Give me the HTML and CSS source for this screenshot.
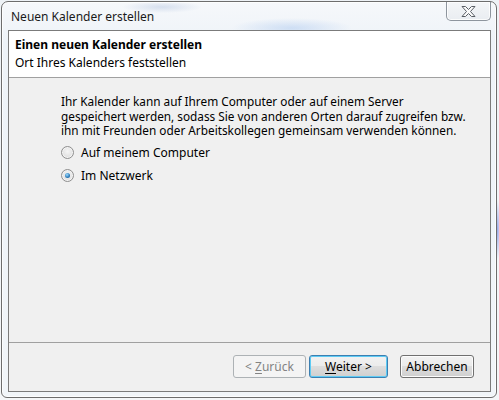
FILE: index.html
```html
<!DOCTYPE html>
<html lang="de">
<head>
<meta charset="utf-8">
<title>Neuen Kalender erstellen</title>
<link rel="stylesheet" href="styles.css">
</head>
<body>
<div class="desktop">
  <div class="window">
    <div class="titlebar">
      <span class="title">Neuen Kalender erstellen</span>
      <div class="close">
        <svg width="17" height="13" viewBox="0 0 17 13">
          <path d="M2 1.5 H5.5 L8.5 4.5 L11.5 1.5 H15 L10.5 6.5 L15 11.5 H11.5 L8.5 8.5 L5.5 11.5 H2 L6.5 6.5 Z" fill="#fbfbfb" stroke="#5a5f66" stroke-width="1" stroke-linejoin="round"/>
        </svg>
      </div>
    </div>
    <div class="client">
      <div class="header">
        <div class="h-title">Einen neuen Kalender erstellen</div>
        <div class="h-sub">Ort Ihres Kalenders feststellen</div>
      </div>
      <div class="content">
        <p class="desc">Ihr Kalender kann auf Ihrem Computer oder auf einem Server<br>gespeichert werden, sodass Sie von anderen Orten darauf zugreifen bzw.<br>ihn mit Freunden oder Arbeitskollegen gemeinsam verwenden können.</p>
        <div class="options">
          <label class="opt"><span class="radio"></span><span>Auf meinem Computer</span></label>
          <label class="opt"><span class="radio checked"></span><span>Im Netzwerk</span></label>
        </div>
      </div>
      <div class="footer">
        <button class="btn disabled">&lt; <u>Z</u>urück</button>
        <button class="btn default"><u>W</u>eiter &gt;</button>
        <button class="btn cancel">Abbrechen</button>
      </div>
    </div>
  </div>
</div>
</body>
</html>
```
FILE: styles.css
```css
html, body {
  margin: 0;
  padding: 0;
}
body {
  width: 499px;
  height: 400px;
  overflow: hidden;
  font-family: "Noto Sans", "Open Sans", sans-serif;
  font-size: 12px;
  color: #000;
}
.desktop {
  width: 499px;
  height: 400px;
  box-sizing: border-box;
  padding: 1px 2px 2px 1px;
  background:
    radial-gradient(ellipse 30px 8px at 280px 26px, rgba(120,160,230,0.35), transparent),
    radial-gradient(ellipse 20px 8px at 470px 28px, rgba(120,160,230,0.35), transparent),
    radial-gradient(ellipse 4px 30px at 497px 230px, rgba(90,110,220,0.6), transparent),
    linear-gradient(#eef2f6, #f4f6f8);
}
.window {
  width: 496px;
  height: 397px;
  box-sizing: border-box;
  border: 1px solid #6d6d6d;
  border-radius: 7px 7px 6px 6px;
  padding: 0 5px 5px 6px;
  display: flex;
  flex-direction: column;
  background:
    radial-gradient(ellipse 60px 10px at 290px 26px, rgba(140,180,235,0.35), transparent),
    radial-gradient(ellipse 40px 6px at 160px 5px, rgba(120,150,200,0.25), transparent),
    linear-gradient(#f6f8fb, #eef3f8 40px, #f1f5f9);
  box-shadow: inset 0 0 0 1px rgba(255,255,255,0.8);
}
.titlebar {
  height: 28px;
  flex: none;
  display: flex;
  align-items: flex-start;
  justify-content: space-between;
}
.title {
  margin: 7px 0 0 3px;
  font-size: 12px;
  line-height: 16px;
  color: #1a1a1a;
}
.close {
  width: 45px;
  height: 19px;
  box-sizing: border-box;
  border: 1px solid #8e959e;
  border-top: none;
  border-radius: 0 0 5px 5px;
  background: linear-gradient(#f4f6f8, #e9edf1);
  display: flex;
  align-items: center;
  justify-content: center;
  box-shadow: inset 0 0 0 1px rgba(255,255,255,0.8);
}
.client {
  flex: 1;
  border: 1px solid #7b7b7b;
  background: #f0f0f0;
  display: flex;
  flex-direction: column;
}
.header {
  height: 46px;
  flex: none;
  background: #fff;
  border-bottom: 1px solid #a0a0a0;
  padding: 0 6px;
}
.h-title {
  font-weight: bold;
  margin-top: 6px;
  line-height: 16px;
}
.h-sub {
  line-height: 16px;
  margin-top: 2px;
}
.content {
  flex: 1;
  padding: 16px 20px 0 52px;
}
.desc {
  margin: 0;
  line-height: 14.5px;
  font-size: 11.8px;
}
.options {
  margin-top: 7px;
  display: flex;
  flex-direction: column;
  gap: 7px;
}
.opt {
  display: flex;
  align-items: center;
  gap: 7px;
  height: 16px;
  line-height: 16px;
}
.radio {
  width: 11px;
  height: 11px;
  border-radius: 50%;
  border: 1px solid #8f8f8f;
  background: radial-gradient(circle at 50% 40%, #f6f6f6, #d5d5d5);
  box-shadow: inset 0 0 0 1px #f4f4f4;
  position: relative;
}
.radio.checked::after {
  content: "";
  position: absolute;
  left: 3px;
  top: 3px;
  width: 5px;
  height: 5px;
  border-radius: 50%;
  background: radial-gradient(circle at 40% 35%, #9fdcff, #2b7ab8 60%, #164f84);
}
.footer {
  height: 49px;
  flex: none;
  border-top: 1px solid #a0a0a0;
  display: flex;
  align-items: flex-start;
  padding: 12px 16px 0 0;
  justify-content: flex-end;
  box-sizing: border-box;
}
.btn {
  height: 23px;
  box-sizing: border-box;
  font-family: inherit;
  font-size: 12px;
  border-radius: 3px;
  border: 1px solid #707070;
  background: linear-gradient(#f2f2f2, #ebebeb 50%, #dddddd 50%, #cfcfcf);
  box-shadow: inset 0 0 0 1px #fcfcfc;
  color: #000;
  padding: 0;
  line-height: 19px;
}
.btn.disabled {
  width: 73px;
  color: #838383;
  border-color: #adb2b5;
  background: #f4f4f4;
  box-shadow: none;
}
.btn.default {
  width: 79px;
  margin-left: 3px;
  border-color: #3c7fb1;
  background: linear-gradient(#f2f2f2, #ebebeb 50%, #dddddd 50%, #cfcfcf);
  box-shadow: inset 0 0 0 1px #5ecbf4;
}
.btn.cancel {
  width: 74px;
  margin-left: 12px;
}
u {
  text-decoration-thickness: 1px;
  text-underline-offset: 2px;
}
```
